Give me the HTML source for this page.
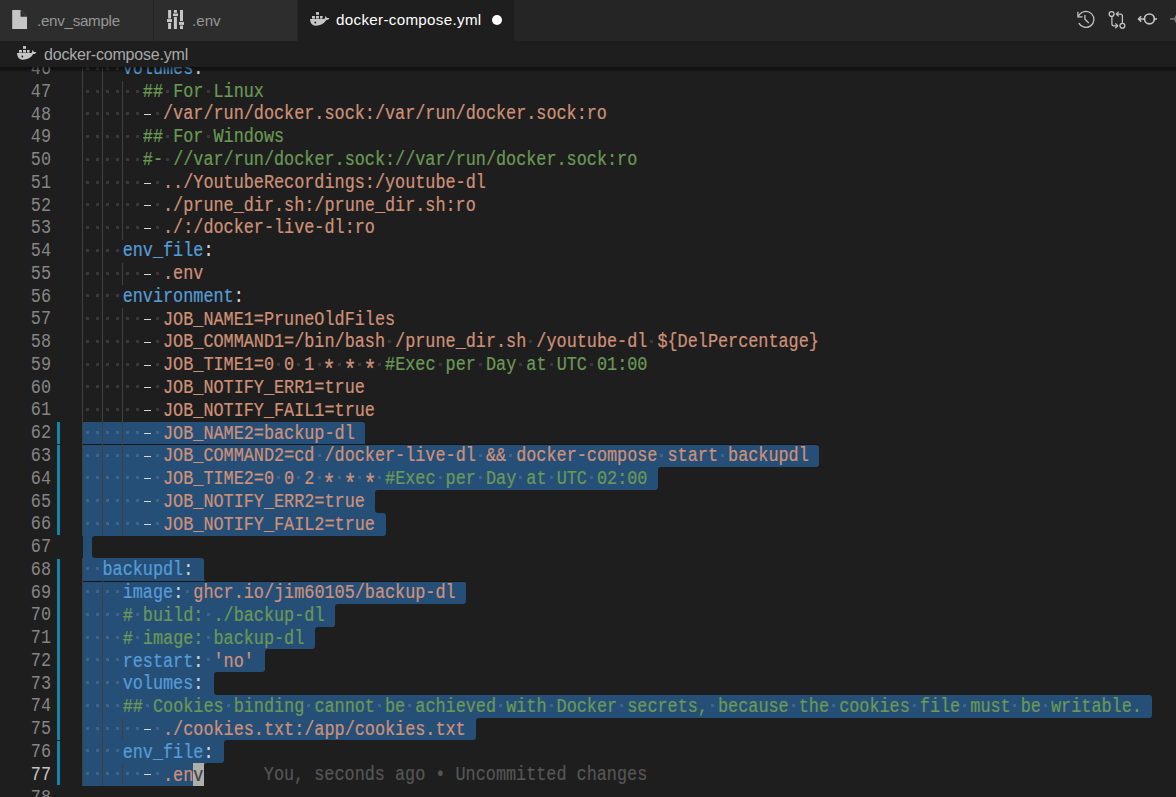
<!DOCTYPE html><html><head><meta charset="utf-8"><style>
*{margin:0;padding:0;box-sizing:border-box}
html,body{width:1176px;height:797px;overflow:hidden;background:#1e1e1e}
body{position:relative;font-family:"Liberation Sans",sans-serif}
.abs{position:absolute}
.ln{margin-left:-0.7px;-webkit-text-stroke:0.2px currentColor;transform:scaleY(1.22);transform-origin:0 15.35px;position:absolute;left:83.0px;height:22.75px;line-height:22.75px;font-family:"Liberation Mono",monospace;font-size:16.82px;white-space:pre;color:#d4d4d4}
.ws{color:rgba(227,228,226,0.16)}
.num{transform:scaleY(1.22);transform-origin:0 15.35px;position:absolute;left:0;width:51px;text-align:right;height:22.75px;line-height:22.75px;font-family:"Liberation Mono",monospace;font-size:16.82px;color:#858585;white-space:pre}
.dot{position:absolute;width:3px;height:3px;background:rgba(227,228,226,0.14)}
.dash{position:absolute;width:7.5px;height:1.25px;background:#d4d4d4}
.ast{display:inline-block;transform:translateY(5.6px) scale(1.3)}
.sel{position:absolute;background:#264f78}
.guide{position:absolute;width:1px;background:#404040}
.gbar{position:absolute;left:57px;width:3px;background:#1285a8}

.tl{white-space:pre;line-height:22px}
</style></head><body>
<div class="sel" style="left:83.0px;top:421.90px;width:282.38px;height:22.75px;border-radius:0px 3px 0px 0px"></div><div class="sel" style="left:83.0px;top:444.65px;width:736.21px;height:22.75px;border-radius:0px 3px 3px 0px"></div><div class="sel" style="left:83.0px;top:467.40px;width:574.85px;height:22.75px;border-radius:0px 0px 3px 0px"></div><div class="sel" style="left:83.0px;top:490.15px;width:292.47px;height:22.75px;border-radius:0px 0px 0px 0px"></div><div class="sel" style="left:83.0px;top:512.90px;width:302.55px;height:22.75px;border-radius:0px 3px 3px 0px"></div><div class="sel" style="left:83.0px;top:535.65px;width:9.40px;height:22.75px;border-radius:0px 0px 0px 0px"></div><div class="sel" style="left:83.0px;top:558.40px;width:121.02px;height:22.75px;border-radius:0px 3px 0px 0px"></div><div class="sel" style="left:83.0px;top:581.15px;width:383.23px;height:22.75px;border-radius:0px 3px 3px 0px"></div><div class="sel" style="left:83.0px;top:603.90px;width:252.12px;height:22.75px;border-radius:0px 0px 3px 0px"></div><div class="sel" style="left:83.0px;top:626.65px;width:231.96px;height:22.75px;border-radius:0px 0px 3px 0px"></div><div class="sel" style="left:83.0px;top:649.40px;width:181.53px;height:22.75px;border-radius:0px 0px 3px 0px"></div><div class="sel" style="left:83.0px;top:672.15px;width:131.11px;height:22.75px;border-radius:0px 0px 0px 0px"></div><div class="sel" style="left:83.0px;top:694.90px;width:1069.01px;height:22.75px;border-radius:0px 3px 3px 0px"></div><div class="sel" style="left:83.0px;top:717.65px;width:393.32px;height:22.75px;border-radius:0px 0px 3px 0px"></div><div class="sel" style="left:83.0px;top:740.40px;width:141.19px;height:22.75px;border-radius:0px 0px 3px 0px"></div><div class="sel" style="left:83.0px;top:763.15px;width:121.02px;height:22.75px;border-radius:0px 0px 3px 0px"></div><div class="abs" style="left:365.38px;top:441.65px;width:3px;height:3px;background:#264f78"></div><div class="abs" style="left:365.38px;top:441.65px;width:3px;height:3px;background:#1e1e1e;border-bottom-left-radius:3px"></div><div class="abs" style="left:657.85px;top:467.40px;width:3px;height:3px;background:#264f78"></div><div class="abs" style="left:657.85px;top:467.40px;width:3px;height:3px;background:#1e1e1e;border-top-left-radius:3px"></div><div class="abs" style="left:375.47px;top:490.15px;width:3px;height:3px;background:#264f78"></div><div class="abs" style="left:375.47px;top:490.15px;width:3px;height:3px;background:#1e1e1e;border-top-left-radius:3px"></div><div class="abs" style="left:375.47px;top:509.90px;width:3px;height:3px;background:#264f78"></div><div class="abs" style="left:375.47px;top:509.90px;width:3px;height:3px;background:#1e1e1e;border-bottom-left-radius:3px"></div><div class="abs" style="left:92.40px;top:535.65px;width:3px;height:3px;background:#264f78"></div><div class="abs" style="left:92.40px;top:535.65px;width:3px;height:3px;background:#1e1e1e;border-top-left-radius:3px"></div><div class="abs" style="left:92.40px;top:555.40px;width:3px;height:3px;background:#264f78"></div><div class="abs" style="left:92.40px;top:555.40px;width:3px;height:3px;background:#1e1e1e;border-bottom-left-radius:3px"></div><div class="abs" style="left:204.02px;top:578.15px;width:3px;height:3px;background:#264f78"></div><div class="abs" style="left:204.02px;top:578.15px;width:3px;height:3px;background:#1e1e1e;border-bottom-left-radius:3px"></div><div class="abs" style="left:335.12px;top:603.90px;width:3px;height:3px;background:#264f78"></div><div class="abs" style="left:335.12px;top:603.90px;width:3px;height:3px;background:#1e1e1e;border-top-left-radius:3px"></div><div class="abs" style="left:314.96px;top:626.65px;width:3px;height:3px;background:#264f78"></div><div class="abs" style="left:314.96px;top:626.65px;width:3px;height:3px;background:#1e1e1e;border-top-left-radius:3px"></div><div class="abs" style="left:264.53px;top:649.40px;width:3px;height:3px;background:#264f78"></div><div class="abs" style="left:264.53px;top:649.40px;width:3px;height:3px;background:#1e1e1e;border-top-left-radius:3px"></div><div class="abs" style="left:214.11px;top:672.15px;width:3px;height:3px;background:#264f78"></div><div class="abs" style="left:214.11px;top:672.15px;width:3px;height:3px;background:#1e1e1e;border-top-left-radius:3px"></div><div class="abs" style="left:214.11px;top:691.90px;width:3px;height:3px;background:#264f78"></div><div class="abs" style="left:214.11px;top:691.90px;width:3px;height:3px;background:#1e1e1e;border-bottom-left-radius:3px"></div><div class="abs" style="left:476.32px;top:717.65px;width:3px;height:3px;background:#264f78"></div><div class="abs" style="left:476.32px;top:717.65px;width:3px;height:3px;background:#1e1e1e;border-top-left-radius:3px"></div><div class="abs" style="left:224.19px;top:740.40px;width:3px;height:3px;background:#264f78"></div><div class="abs" style="left:224.19px;top:740.40px;width:3px;height:3px;background:#1e1e1e;border-top-left-radius:3px"></div><div class="abs" style="left:204.02px;top:763.15px;width:3px;height:3px;background:#264f78"></div><div class="abs" style="left:204.02px;top:763.15px;width:3px;height:3px;background:#1e1e1e;border-top-left-radius:3px"></div><div class="abs" style="left:83.0px;top:444.15px;width:736.21px;height:1px;background:#151515"></div><div class="abs" style="left:83.0px;top:580.65px;width:383.23px;height:1px;background:#151515"></div><div class="guide" style="left:82px;top:57.90px;height:22.85px"></div><div class="guide" style="left:102px;top:57.90px;height:22.85px"></div><div class="guide" style="left:82px;top:80.65px;height:22.85px"></div><div class="guide" style="left:102px;top:80.65px;height:22.85px"></div><div class="guide" style="left:122px;top:80.65px;height:22.85px"></div><div class="guide" style="left:82px;top:103.40px;height:22.85px"></div><div class="guide" style="left:102px;top:103.40px;height:22.85px"></div><div class="guide" style="left:122px;top:103.40px;height:22.85px"></div><div class="guide" style="left:82px;top:126.15px;height:22.85px"></div><div class="guide" style="left:102px;top:126.15px;height:22.85px"></div><div class="guide" style="left:122px;top:126.15px;height:22.85px"></div><div class="guide" style="left:82px;top:148.90px;height:22.85px"></div><div class="guide" style="left:102px;top:148.90px;height:22.85px"></div><div class="guide" style="left:122px;top:148.90px;height:22.85px"></div><div class="guide" style="left:82px;top:171.65px;height:22.85px"></div><div class="guide" style="left:102px;top:171.65px;height:22.85px"></div><div class="guide" style="left:122px;top:171.65px;height:22.85px"></div><div class="guide" style="left:82px;top:194.40px;height:22.85px"></div><div class="guide" style="left:102px;top:194.40px;height:22.85px"></div><div class="guide" style="left:122px;top:194.40px;height:22.85px"></div><div class="guide" style="left:82px;top:217.15px;height:22.85px"></div><div class="guide" style="left:102px;top:217.15px;height:22.85px"></div><div class="guide" style="left:122px;top:217.15px;height:22.85px"></div><div class="guide" style="left:82px;top:239.90px;height:22.85px"></div><div class="guide" style="left:102px;top:239.90px;height:22.85px"></div><div class="guide" style="left:82px;top:262.65px;height:22.85px"></div><div class="guide" style="left:102px;top:262.65px;height:22.85px"></div><div class="guide" style="left:122px;top:262.65px;height:22.85px"></div><div class="guide" style="left:82px;top:285.40px;height:22.85px"></div><div class="guide" style="left:102px;top:285.40px;height:22.85px"></div><div class="guide" style="left:82px;top:308.15px;height:22.85px"></div><div class="guide" style="left:102px;top:308.15px;height:22.85px"></div><div class="guide" style="left:122px;top:308.15px;height:22.85px"></div><div class="guide" style="left:82px;top:330.90px;height:22.85px"></div><div class="guide" style="left:102px;top:330.90px;height:22.85px"></div><div class="guide" style="left:122px;top:330.90px;height:22.85px"></div><div class="guide" style="left:82px;top:353.65px;height:22.85px"></div><div class="guide" style="left:102px;top:353.65px;height:22.85px"></div><div class="guide" style="left:122px;top:353.65px;height:22.85px"></div><div class="guide" style="left:82px;top:376.40px;height:22.85px"></div><div class="guide" style="left:102px;top:376.40px;height:22.85px"></div><div class="guide" style="left:122px;top:376.40px;height:22.85px"></div><div class="guide" style="left:82px;top:399.15px;height:22.85px"></div><div class="guide" style="left:102px;top:399.15px;height:22.85px"></div><div class="guide" style="left:122px;top:399.15px;height:22.85px"></div><div class="guide" style="left:82px;top:421.90px;height:22.85px"></div><div class="guide" style="left:102px;top:421.90px;height:22.85px"></div><div class="guide" style="left:122px;top:421.90px;height:22.85px"></div><div class="guide" style="left:82px;top:444.65px;height:22.85px"></div><div class="guide" style="left:102px;top:444.65px;height:22.85px"></div><div class="guide" style="left:122px;top:444.65px;height:22.85px"></div><div class="guide" style="left:82px;top:467.40px;height:22.85px"></div><div class="guide" style="left:102px;top:467.40px;height:22.85px"></div><div class="guide" style="left:122px;top:467.40px;height:22.85px"></div><div class="guide" style="left:82px;top:490.15px;height:22.85px"></div><div class="guide" style="left:102px;top:490.15px;height:22.85px"></div><div class="guide" style="left:122px;top:490.15px;height:22.85px"></div><div class="guide" style="left:82px;top:512.90px;height:22.85px"></div><div class="guide" style="left:102px;top:512.90px;height:22.85px"></div><div class="guide" style="left:122px;top:512.90px;height:22.85px"></div><div class="guide" style="left:82px;top:558.40px;height:22.85px"></div><div class="guide" style="left:82px;top:581.15px;height:22.85px"></div><div class="guide" style="left:102px;top:581.15px;height:22.85px"></div><div class="guide" style="left:82px;top:603.90px;height:22.85px"></div><div class="guide" style="left:102px;top:603.90px;height:22.85px"></div><div class="guide" style="left:82px;top:626.65px;height:22.85px"></div><div class="guide" style="left:102px;top:626.65px;height:22.85px"></div><div class="guide" style="left:82px;top:649.40px;height:22.85px"></div><div class="guide" style="left:102px;top:649.40px;height:22.85px"></div><div class="guide" style="left:82px;top:672.15px;height:22.85px"></div><div class="guide" style="left:102px;top:672.15px;height:22.85px"></div><div class="guide" style="left:82px;top:694.90px;height:22.85px"></div><div class="guide" style="left:102px;top:694.90px;height:22.85px"></div><div class="guide" style="left:82px;top:717.65px;height:22.85px"></div><div class="guide" style="left:102px;top:717.65px;height:22.85px"></div><div class="guide" style="left:122px;top:717.65px;height:22.85px"></div><div class="guide" style="left:82px;top:740.40px;height:22.85px"></div><div class="guide" style="left:102px;top:740.40px;height:22.85px"></div><div class="guide" style="left:82px;top:763.15px;height:22.85px"></div><div class="guide" style="left:102px;top:763.15px;height:22.85px"></div><div class="guide" style="left:122px;top:763.15px;height:22.85px"></div><div class="abs" style="left:193px;top:763.15px;width:10.9px;height:22.75px;background:#aeafad"></div><div class="ln" style="top:58.75px">    <span style="color:#569cd6">volumes</span><span style="color:#d4d4d4">:</span></div><div class="num" style="top:58.97px;">46</div><div class="ln" style="top:81.55px">      <span style="color:#6a9955">##</span> <span style="color:#6a9955">For</span> <span style="color:#6a9955">Linux</span></div><div class="num" style="top:81.74px;">47</div><div class="ln" style="top:104.35px">        <span style="color:#ce9178">/var/run/docker.sock:/var/run/docker.sock:ro</span></div><div class="num" style="top:104.51px;">48</div><div class="ln" style="top:127.15px">      <span style="color:#6a9955">##</span> <span style="color:#6a9955">For</span> <span style="color:#6a9955">Windows</span></div><div class="num" style="top:127.27px;">49</div><div class="ln" style="top:149.95px">      <span style="color:#6a9955">#-</span> <span style="color:#6a9955">//var/run/docker.sock://var/run/docker.sock:ro</span></div><div class="num" style="top:150.04px;">50</div><div class="ln" style="top:172.75px">        <span style="color:#ce9178">../YoutubeRecordings:/youtube-dl</span></div><div class="num" style="top:172.81px;">51</div><div class="ln" style="top:195.55px">        <span style="color:#ce9178">./prune_dir.sh:/prune_dir.sh:ro</span></div><div class="num" style="top:195.58px;">52</div><div class="ln" style="top:218.35px">        <span style="color:#ce9178">./:/docker-live-dl:ro</span></div><div class="num" style="top:218.34px;">53</div><div class="ln" style="top:241.15px">    <span style="color:#569cd6">env_file</span><span style="color:#d4d4d4">:</span></div><div class="num" style="top:241.11px;">54</div><div class="ln" style="top:263.95px">        <span style="color:#ce9178">.env</span></div><div class="num" style="top:263.88px;">55</div><div class="ln" style="top:286.75px">    <span style="color:#569cd6">environment</span><span style="color:#d4d4d4">:</span></div><div class="num" style="top:286.64px;">56</div><div class="ln" style="top:309.55px">        <span style="color:#ce9178">JOB_NAME1=PruneOldFiles</span></div><div class="num" style="top:309.41px;">57</div><div class="ln" style="top:332.35px">        <span style="color:#ce9178">JOB_COMMAND1=/bin/bash</span> <span style="color:#ce9178">/prune_dir.sh</span> <span style="color:#ce9178">/youtube-dl</span> <span style="color:#ce9178">${DelPercentage}</span></div><div class="num" style="top:332.18px;">58</div><div class="ln" style="top:355.15px">        <span style="color:#ce9178">JOB_TIME1=0</span> <span style="color:#ce9178">0</span> <span style="color:#ce9178">1</span> <span style="color:#ce9178"><span class="ast">*</span></span> <span style="color:#ce9178"><span class="ast">*</span></span> <span style="color:#ce9178"><span class="ast">*</span></span> <span style="color:#6a9955">#Exec</span> <span style="color:#6a9955">per</span> <span style="color:#6a9955">Day</span> <span style="color:#6a9955">at</span> <span style="color:#6a9955">UTC</span> <span style="color:#6a9955">01:00</span></div><div class="num" style="top:354.94px;">59</div><div class="ln" style="top:377.95px">        <span style="color:#ce9178">JOB_NOTIFY_ERR1=true</span></div><div class="num" style="top:377.71px;">60</div><div class="ln" style="top:400.75px">        <span style="color:#ce9178">JOB_NOTIFY_FAIL1=true</span></div><div class="num" style="top:400.48px;">61</div><div class="ln" style="top:423.55px">        <span style="color:#ce9178">JOB_NAME2=backup-dl</span></div><div class="num" style="top:423.24px;">62</div><div class="ln" style="top:446.35px">        <span style="color:#ce9178">JOB_COMMAND2=cd</span> <span style="color:#ce9178">/docker-live-dl</span> <span style="color:#ce9178">&amp;&amp;</span> <span style="color:#ce9178">docker-compose</span> <span style="color:#ce9178">start</span> <span style="color:#ce9178">backupdl</span></div><div class="num" style="top:446.01px;">63</div><div class="ln" style="top:469.15px">        <span style="color:#ce9178">JOB_TIME2=0</span> <span style="color:#ce9178">0</span> <span style="color:#ce9178">2</span> <span style="color:#ce9178"><span class="ast">*</span></span> <span style="color:#ce9178"><span class="ast">*</span></span> <span style="color:#ce9178"><span class="ast">*</span></span> <span style="color:#6a9955">#Exec</span> <span style="color:#6a9955">per</span> <span style="color:#6a9955">Day</span> <span style="color:#6a9955">at</span> <span style="color:#6a9955">UTC</span> <span style="color:#6a9955">02:00</span></div><div class="num" style="top:468.78px;">64</div><div class="ln" style="top:491.95px">        <span style="color:#ce9178">JOB_NOTIFY_ERR2=true</span></div><div class="num" style="top:491.55px;">65</div><div class="ln" style="top:514.75px">        <span style="color:#ce9178">JOB_NOTIFY_FAIL2=true</span></div><div class="num" style="top:514.31px;">66</div><div class="ln" style="top:537.55px"></div><div class="num" style="top:537.08px;">67</div><div class="ln" style="top:560.35px">  <span style="color:#569cd6">backupdl</span><span style="color:#d4d4d4">:</span></div><div class="num" style="top:559.85px;">68</div><div class="ln" style="top:583.15px">    <span style="color:#569cd6">image</span><span style="color:#d4d4d4">:</span> <span style="color:#ce9178">ghcr.io/jim60105/backup-dl</span></div><div class="num" style="top:582.61px;">69</div><div class="ln" style="top:605.95px">    <span style="color:#6a9955">#</span> <span style="color:#6a9955">build:</span> <span style="color:#6a9955">./backup-dl</span></div><div class="num" style="top:605.38px;">70</div><div class="ln" style="top:628.75px">    <span style="color:#6a9955">#</span> <span style="color:#6a9955">image:</span> <span style="color:#6a9955">backup-dl</span></div><div class="num" style="top:628.15px;">71</div><div class="ln" style="top:651.55px">    <span style="color:#569cd6">restart</span><span style="color:#d4d4d4">:</span> <span style="color:#ce9178">&#x27;no&#x27;</span></div><div class="num" style="top:650.91px;">72</div><div class="ln" style="top:674.35px">    <span style="color:#569cd6">volumes</span><span style="color:#d4d4d4">:</span></div><div class="num" style="top:673.68px;">73</div><div class="ln" style="top:697.15px">    <span style="color:#6a9955">##</span> <span style="color:#6a9955">Cookies</span> <span style="color:#6a9955">binding</span> <span style="color:#6a9955">cannot</span> <span style="color:#6a9955">be</span> <span style="color:#6a9955">achieved</span> <span style="color:#6a9955">with</span> <span style="color:#6a9955">Docker</span> <span style="color:#6a9955">secrets,</span> <span style="color:#6a9955">because</span> <span style="color:#6a9955">the</span> <span style="color:#6a9955">cookies</span> <span style="color:#6a9955">file</span> <span style="color:#6a9955">must</span> <span style="color:#6a9955">be</span> <span style="color:#6a9955">writable.</span></div><div class="num" style="top:696.45px;">74</div><div class="ln" style="top:719.95px">        <span style="color:#ce9178">./cookies.txt:/app/cookies.txt</span></div><div class="num" style="top:719.22px;">75</div><div class="ln" style="top:742.75px">    <span style="color:#569cd6">env_file</span><span style="color:#d4d4d4">:</span></div><div class="num" style="top:741.98px;">76</div><div class="ln" style="top:765.55px">        <span style="color:#ce9178">.en</span><span style="color:#404040">v</span></div><div class="num" style="top:764.75px;color:#c6c6c6">77</div><div class="ln" style="top:788.35px"></div><div class="num" style="top:787.52px;">78</div><div class="dot" style="left:86px;top:67px"></div><div class="dot" style="left:96px;top:67px"></div><div class="dot" style="left:106px;top:67px"></div><div class="dot" style="left:116px;top:67px"></div><div class="dot" style="left:86px;top:90px"></div><div class="dot" style="left:96px;top:90px"></div><div class="dot" style="left:106px;top:90px"></div><div class="dot" style="left:116px;top:90px"></div><div class="dot" style="left:126px;top:90px"></div><div class="dot" style="left:136px;top:90px"></div><div class="dot" style="left:166px;top:90px"></div><div class="dot" style="left:207px;top:90px"></div><div class="dot" style="left:86px;top:112px"></div><div class="dot" style="left:96px;top:112px"></div><div class="dot" style="left:106px;top:112px"></div><div class="dot" style="left:116px;top:112px"></div><div class="dot" style="left:126px;top:112px"></div><div class="dot" style="left:136px;top:112px"></div><div class="dash" style="left:143.81px;top:114px"></div><div class="dot" style="left:156px;top:112px"></div><div class="dot" style="left:86px;top:135px"></div><div class="dot" style="left:96px;top:135px"></div><div class="dot" style="left:106px;top:135px"></div><div class="dot" style="left:116px;top:135px"></div><div class="dot" style="left:126px;top:135px"></div><div class="dot" style="left:136px;top:135px"></div><div class="dot" style="left:166px;top:135px"></div><div class="dot" style="left:207px;top:135px"></div><div class="dot" style="left:86px;top:158px"></div><div class="dot" style="left:96px;top:158px"></div><div class="dot" style="left:106px;top:158px"></div><div class="dot" style="left:116px;top:158px"></div><div class="dot" style="left:126px;top:158px"></div><div class="dot" style="left:136px;top:158px"></div><div class="dot" style="left:166px;top:158px"></div><div class="dot" style="left:86px;top:181px"></div><div class="dot" style="left:96px;top:181px"></div><div class="dot" style="left:106px;top:181px"></div><div class="dot" style="left:116px;top:181px"></div><div class="dot" style="left:126px;top:181px"></div><div class="dot" style="left:136px;top:181px"></div><div class="dash" style="left:143.81px;top:183px"></div><div class="dot" style="left:156px;top:181px"></div><div class="dot" style="left:86px;top:203px"></div><div class="dot" style="left:96px;top:203px"></div><div class="dot" style="left:106px;top:203px"></div><div class="dot" style="left:116px;top:203px"></div><div class="dot" style="left:126px;top:203px"></div><div class="dot" style="left:136px;top:203px"></div><div class="dash" style="left:143.81px;top:205px"></div><div class="dot" style="left:156px;top:203px"></div><div class="dot" style="left:86px;top:226px"></div><div class="dot" style="left:96px;top:226px"></div><div class="dot" style="left:106px;top:226px"></div><div class="dot" style="left:116px;top:226px"></div><div class="dot" style="left:126px;top:226px"></div><div class="dot" style="left:136px;top:226px"></div><div class="dash" style="left:143.81px;top:228px"></div><div class="dot" style="left:156px;top:226px"></div><div class="dot" style="left:86px;top:249px"></div><div class="dot" style="left:96px;top:249px"></div><div class="dot" style="left:106px;top:249px"></div><div class="dot" style="left:116px;top:249px"></div><div class="dot" style="left:86px;top:272px"></div><div class="dot" style="left:96px;top:272px"></div><div class="dot" style="left:106px;top:272px"></div><div class="dot" style="left:116px;top:272px"></div><div class="dot" style="left:126px;top:272px"></div><div class="dot" style="left:136px;top:272px"></div><div class="dash" style="left:143.81px;top:274px"></div><div class="dot" style="left:156px;top:272px"></div><div class="dot" style="left:86px;top:294px"></div><div class="dot" style="left:96px;top:294px"></div><div class="dot" style="left:106px;top:294px"></div><div class="dot" style="left:116px;top:294px"></div><div class="dot" style="left:86px;top:317px"></div><div class="dot" style="left:96px;top:317px"></div><div class="dot" style="left:106px;top:317px"></div><div class="dot" style="left:116px;top:317px"></div><div class="dot" style="left:126px;top:317px"></div><div class="dot" style="left:136px;top:317px"></div><div class="dash" style="left:143.81px;top:319px"></div><div class="dot" style="left:156px;top:317px"></div><div class="dot" style="left:86px;top:340px"></div><div class="dot" style="left:96px;top:340px"></div><div class="dot" style="left:106px;top:340px"></div><div class="dot" style="left:116px;top:340px"></div><div class="dot" style="left:126px;top:340px"></div><div class="dot" style="left:136px;top:340px"></div><div class="dash" style="left:143.81px;top:342px"></div><div class="dot" style="left:156px;top:340px"></div><div class="dot" style="left:388px;top:340px"></div><div class="dot" style="left:529px;top:340px"></div><div class="dot" style="left:650px;top:340px"></div><div class="dot" style="left:86px;top:363px"></div><div class="dot" style="left:96px;top:363px"></div><div class="dot" style="left:106px;top:363px"></div><div class="dot" style="left:116px;top:363px"></div><div class="dot" style="left:126px;top:363px"></div><div class="dot" style="left:136px;top:363px"></div><div class="dash" style="left:143.81px;top:365px"></div><div class="dot" style="left:156px;top:363px"></div><div class="dot" style="left:277px;top:363px"></div><div class="dot" style="left:297px;top:363px"></div><div class="dot" style="left:318px;top:363px"></div><div class="dot" style="left:338px;top:363px"></div><div class="dot" style="left:358px;top:363px"></div><div class="dot" style="left:378px;top:363px"></div><div class="dot" style="left:439px;top:363px"></div><div class="dot" style="left:479px;top:363px"></div><div class="dot" style="left:519px;top:363px"></div><div class="dot" style="left:550px;top:363px"></div><div class="dot" style="left:590px;top:363px"></div><div class="dot" style="left:86px;top:385px"></div><div class="dot" style="left:96px;top:385px"></div><div class="dot" style="left:106px;top:385px"></div><div class="dot" style="left:116px;top:385px"></div><div class="dot" style="left:126px;top:385px"></div><div class="dot" style="left:136px;top:385px"></div><div class="dash" style="left:143.81px;top:387px"></div><div class="dot" style="left:156px;top:385px"></div><div class="dot" style="left:86px;top:408px"></div><div class="dot" style="left:96px;top:408px"></div><div class="dot" style="left:106px;top:408px"></div><div class="dot" style="left:116px;top:408px"></div><div class="dot" style="left:126px;top:408px"></div><div class="dot" style="left:136px;top:408px"></div><div class="dash" style="left:143.81px;top:410px"></div><div class="dot" style="left:156px;top:408px"></div><div class="dot" style="left:86px;top:431px"></div><div class="dot" style="left:96px;top:431px"></div><div class="dot" style="left:106px;top:431px"></div><div class="dot" style="left:116px;top:431px"></div><div class="dot" style="left:126px;top:431px"></div><div class="dot" style="left:136px;top:431px"></div><div class="dash" style="left:143.81px;top:433px"></div><div class="dot" style="left:156px;top:431px"></div><div class="dot" style="left:86px;top:454px"></div><div class="dot" style="left:96px;top:454px"></div><div class="dot" style="left:106px;top:454px"></div><div class="dot" style="left:116px;top:454px"></div><div class="dot" style="left:126px;top:454px"></div><div class="dot" style="left:136px;top:454px"></div><div class="dash" style="left:143.81px;top:456px"></div><div class="dot" style="left:156px;top:454px"></div><div class="dot" style="left:318px;top:454px"></div><div class="dot" style="left:479px;top:454px"></div><div class="dot" style="left:509px;top:454px"></div><div class="dot" style="left:660px;top:454px"></div><div class="dot" style="left:721px;top:454px"></div><div class="dot" style="left:86px;top:476px"></div><div class="dot" style="left:96px;top:476px"></div><div class="dot" style="left:106px;top:476px"></div><div class="dot" style="left:116px;top:476px"></div><div class="dot" style="left:126px;top:476px"></div><div class="dot" style="left:136px;top:476px"></div><div class="dash" style="left:143.81px;top:478px"></div><div class="dot" style="left:156px;top:476px"></div><div class="dot" style="left:277px;top:476px"></div><div class="dot" style="left:297px;top:476px"></div><div class="dot" style="left:318px;top:476px"></div><div class="dot" style="left:338px;top:476px"></div><div class="dot" style="left:358px;top:476px"></div><div class="dot" style="left:378px;top:476px"></div><div class="dot" style="left:439px;top:476px"></div><div class="dot" style="left:479px;top:476px"></div><div class="dot" style="left:519px;top:476px"></div><div class="dot" style="left:550px;top:476px"></div><div class="dot" style="left:590px;top:476px"></div><div class="dot" style="left:86px;top:499px"></div><div class="dot" style="left:96px;top:499px"></div><div class="dot" style="left:106px;top:499px"></div><div class="dot" style="left:116px;top:499px"></div><div class="dot" style="left:126px;top:499px"></div><div class="dot" style="left:136px;top:499px"></div><div class="dash" style="left:143.81px;top:501px"></div><div class="dot" style="left:156px;top:499px"></div><div class="dot" style="left:86px;top:522px"></div><div class="dot" style="left:96px;top:522px"></div><div class="dot" style="left:106px;top:522px"></div><div class="dot" style="left:116px;top:522px"></div><div class="dot" style="left:126px;top:522px"></div><div class="dot" style="left:136px;top:522px"></div><div class="dash" style="left:143.81px;top:524px"></div><div class="dot" style="left:156px;top:522px"></div><div class="dot" style="left:86px;top:567px"></div><div class="dot" style="left:96px;top:567px"></div><div class="dot" style="left:86px;top:590px"></div><div class="dot" style="left:96px;top:590px"></div><div class="dot" style="left:106px;top:590px"></div><div class="dot" style="left:116px;top:590px"></div><div class="dot" style="left:186px;top:590px"></div><div class="dot" style="left:86px;top:613px"></div><div class="dot" style="left:96px;top:613px"></div><div class="dot" style="left:106px;top:613px"></div><div class="dot" style="left:116px;top:613px"></div><div class="dot" style="left:136px;top:613px"></div><div class="dot" style="left:207px;top:613px"></div><div class="dot" style="left:86px;top:636px"></div><div class="dot" style="left:96px;top:636px"></div><div class="dot" style="left:106px;top:636px"></div><div class="dot" style="left:116px;top:636px"></div><div class="dot" style="left:136px;top:636px"></div><div class="dot" style="left:207px;top:636px"></div><div class="dot" style="left:86px;top:658px"></div><div class="dot" style="left:96px;top:658px"></div><div class="dot" style="left:106px;top:658px"></div><div class="dot" style="left:116px;top:658px"></div><div class="dot" style="left:207px;top:658px"></div><div class="dot" style="left:86px;top:681px"></div><div class="dot" style="left:96px;top:681px"></div><div class="dot" style="left:106px;top:681px"></div><div class="dot" style="left:116px;top:681px"></div><div class="dot" style="left:86px;top:704px"></div><div class="dot" style="left:96px;top:704px"></div><div class="dot" style="left:106px;top:704px"></div><div class="dot" style="left:116px;top:704px"></div><div class="dot" style="left:146px;top:704px"></div><div class="dot" style="left:227px;top:704px"></div><div class="dot" style="left:307px;top:704px"></div><div class="dot" style="left:378px;top:704px"></div><div class="dot" style="left:408px;top:704px"></div><div class="dot" style="left:499px;top:704px"></div><div class="dot" style="left:550px;top:704px"></div><div class="dot" style="left:620px;top:704px"></div><div class="dot" style="left:711px;top:704px"></div><div class="dot" style="left:792px;top:704px"></div><div class="dot" style="left:832px;top:704px"></div><div class="dot" style="left:913px;top:704px"></div><div class="dot" style="left:963px;top:704px"></div><div class="dot" style="left:1013px;top:704px"></div><div class="dot" style="left:1044px;top:704px"></div><div class="dot" style="left:86px;top:727px"></div><div class="dot" style="left:96px;top:727px"></div><div class="dot" style="left:106px;top:727px"></div><div class="dot" style="left:116px;top:727px"></div><div class="dot" style="left:126px;top:727px"></div><div class="dot" style="left:136px;top:727px"></div><div class="dash" style="left:143.81px;top:729px"></div><div class="dot" style="left:156px;top:727px"></div><div class="dot" style="left:86px;top:749px"></div><div class="dot" style="left:96px;top:749px"></div><div class="dot" style="left:106px;top:749px"></div><div class="dot" style="left:116px;top:749px"></div><div class="dot" style="left:86px;top:772px"></div><div class="dot" style="left:96px;top:772px"></div><div class="dot" style="left:106px;top:772px"></div><div class="dot" style="left:116px;top:772px"></div><div class="dot" style="left:126px;top:772px"></div><div class="dot" style="left:136px;top:772px"></div><div class="dash" style="left:143.81px;top:774px"></div><div class="dot" style="left:156px;top:772px"></div><div class="ln" style="left:264.53px;top:764.75px;color:#565656">You, seconds ago • Uncommitted changes</div><div class="gbar" style="top:422.40px;height:21.75px"></div><div class="gbar" style="top:445.15px;height:90.00px"></div><div class="gbar" style="top:558.90px;height:181.00px"></div><div class="gbar" style="top:740.90px;height:44.50px"></div>

<div class="abs" style="left:0;top:41px;width:1176px;height:26px;background:#1e1e1e"></div>
<div class="abs" style="left:0;top:67px;width:1176px;height:6px;background:linear-gradient(rgba(0,0,0,0.55),rgba(0,0,0,0))"></div>
<div class="abs" style="left:17px;top:44.7px"><svg width="20" height="16" viewBox="0 0 20 16"><g fill="#c5c5c5"><rect x="6" y="1.1" width="3" height="2.7"/><rect x="2" y="5" width="3" height="2.6"/><rect x="6" y="5" width="3" height="2.6"/><rect x="10" y="5" width="2.6" height="2.6"/><path d="M0 8.1 H14.5 C15 6.8 15.3 5.8 15.5 5 C16.4 5.7 16.6 6.5 16.8 7.1 C18 7 19 7.2 19.4 7.5 C18.5 8.5 17.5 9 16.3 9.1 C14 13 10 15 5.3 14.8 C2 14.6 0.3 12 0 8.1 Z"/></g><circle cx="5.3" cy="11.5" r="0.9" fill="#1e1e1e"/></svg></div>
<div class="abs tl" style="left:44px;top:43.8px;color:#a9a9a9;font-size:16px;letter-spacing:-0.2px">docker-compose.yml</div>


<div class="abs" style="left:0;top:0;width:1176px;height:41px;background:#252526"></div>
<div class="abs" style="left:0;top:0;width:153px;height:41px;background:#2d2d2d"></div>
<div class="abs" style="left:154px;top:0;width:143px;height:41px;background:#2d2d2d"></div>
<div class="abs" style="left:298px;top:0;width:216px;height:41px;background:#1e1e1e"></div>
<div class="abs" style="left:12px;top:10px"><svg width="16" height="20" viewBox="0 0 16 20"><path d="M0.2 0 H8.5 L15 6.8 V19 H0.2 Z" fill="#c5c5c5"/><path d="M8.5 0 V6.8 H15 Z" fill="#2d2d2d"/><path d="M9.3 1.8 L13.4 6 H9.3Z" fill="#2d2d2d"/></svg></div>
<div class="abs" style="left:167px;top:10px"><svg width="18" height="20" viewBox="0 0 18 20"><g fill="#c5c5c5"><rect x="1.1" y="0" width="3" height="8.5"/><rect x="0" y="9.1" width="5" height="3"/><rect x="1.1" y="13" width="3" height="6"/><rect x="6.9" y="0" width="3" height="2.8"/><rect x="6" y="3.5" width="5" height="2.6"/><rect x="6.9" y="7" width="3" height="12"/><rect x="13" y="0" width="3" height="11"/><rect x="12" y="11.9" width="5" height="3"/><rect x="13" y="15.5" width="3" height="3.5"/></g></svg></div>
<div class="abs" style="left:310px;top:11px"><svg width="20" height="16" viewBox="0 0 20 16"><g fill="#c5c5c5"><rect x="6" y="1.1" width="3" height="2.7"/><rect x="2" y="5" width="3" height="2.6"/><rect x="6" y="5" width="3" height="2.6"/><rect x="10" y="5" width="2.6" height="2.6"/><path d="M0 8.1 H14.5 C15 6.8 15.3 5.8 15.5 5 C16.4 5.7 16.6 6.5 16.8 7.1 C18 7 19 7.2 19.4 7.5 C18.5 8.5 17.5 9 16.3 9.1 C14 13 10 15 5.3 14.8 C2 14.6 0.3 12 0 8.1 Z"/></g><circle cx="5.3" cy="11.5" r="0.9" fill="#1e1e1e"/></svg></div>
<div class="abs tl" style="left:37px;top:10px;color:#969696;font-size:15.2px;letter-spacing:-0.3px">.env_sample</div>
<div class="abs tl" style="left:192px;top:10px;color:#969696;font-size:15.2px">.env</div>
<div class="abs tl" style="left:336px;top:9.2px;color:#ffffff;font-size:15.2px;letter-spacing:0.3px">docker-compose.yml</div>
<div class="abs" style="left:492px;top:14.5px;width:10px;height:10px;border-radius:50%;background:#ffffff"></div>


<svg class="abs" style="left:1070px;top:5px" width="106" height="30" viewBox="1070 5 106 30" fill="none" stroke="#c5c5c5" stroke-width="1.3">
 <path d="M1078.4 16.2 L1079.6 14.47 A8 8 0 1 1 1078.84 23.16" stroke-width="1.25"/>
 <path d="M1077.9 11.8 V16.8 H1082.5" stroke-width="1.25"/>
 <path d="M1084.9 15 V19.2 L1088.8 23" stroke-width="1.25"/>
 <circle cx="1111.6" cy="14" r="2.45" stroke-width="1.25"/>
 <path d="M1111.9 16.4 V23.8 Q1111.9 25.8 1113.9 25.8 H1117.6" stroke-width="1.25"/>
 <path d="M1115.3 23.4 L1117.7 25.8 L1115.3 28.2" stroke-width="1.25"/>
 <circle cx="1122.4" cy="25.8" r="2.45" stroke-width="1.25"/>
 <path d="M1122.4 23.4 V16 Q1122.4 14 1120.4 14 H1116.4" stroke-width="1.25"/>
 <path d="M1118.7 11.6 L1116.3 14 L1118.7 16.4" stroke-width="1.25"/>
 <circle cx="1149.4" cy="18.9" r="4.9" stroke-width="1.7"/>
 <path d="M1144.5 18.9 H1139 M1154.3 18.9 H1157" stroke-width="1.5"/>
 <path d="M1141.2 16.2 L1138.5 18.9 L1141.2 21.6" stroke-width="1.5"/>
 <path d="M1170 18.9 H1176" stroke="#7a7a7a" stroke-width="1.5"/>
 <circle cx="1180" cy="18.9" r="4.9" stroke="#7a7a7a" stroke-width="1.5"/>
</svg>

</body></html>
